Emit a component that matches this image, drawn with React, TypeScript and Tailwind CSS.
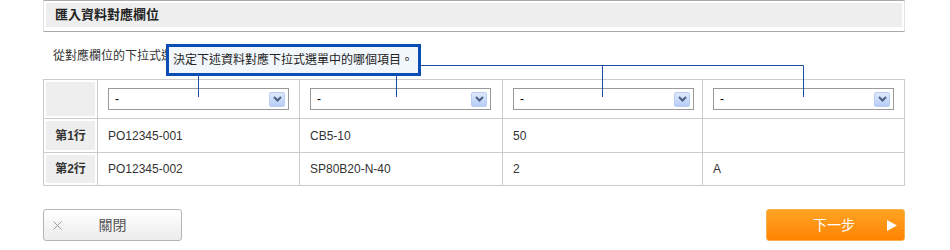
import React from "react";

const cols = [
  { w: "w-[202px]" },
  { w: "w-[203px]" },
  { w: "w-[200px]" },
  { w: "w-[202px]" },
];

const rows = [
  { label: "第1行", cells: ["PO12345-001", "CB5-10", "50", ""], h: "h-[34px]" },
  { label: "第2行", cells: ["PO12345-002", "SP80B20-N-40", "2", "A"], h: "h-[33px]" },
];

const SelectBox = () => (
  <div className="flex h-[22px] w-[181px] items-center justify-between border border-[#999] bg-white pl-[6px] pr-[3px]">
    <span className="text-[12px] text-black">-</span>
    <span className="flex h-[15px] w-[16px] items-center justify-center rounded-[2px] border border-[#b9cdf2] bg-gradient-to-b from-[#dfe9fc] to-[#b7cdf6]">
      <svg width="9" height="6" viewBox="0 0 9 6">
        <path d="M1 1 L4.5 4.5 L8 1" fill="none" stroke="#4b5f86" strokeWidth="2" />
      </svg>
    </span>
  </div>
);

const App = () => {
  return (
    <div className="h-[250px] w-[950px] overflow-hidden bg-white font-['Liberation_Sans','Noto_Sans_CJK_TC',sans-serif] text-[#333]">
      <div className="relative ml-[43px] w-[862px]">
        {/* header */}
        <div className="h-[32px] border-x border-t border-b border-x-[#e2e2e2] border-t-[#aaa] border-b-[#aaa] p-[2px]">
          <div className="flex h-[24px] items-center bg-[#eee] pl-[9px] text-[13px] font-bold text-[#222]">
            匯入資料對應欄位
          </div>
        </div>

        <p className="mt-[16px] h-[16px] pl-[10px] text-[12px] leading-[16px]">
          從對應欄位的下拉式選單中選擇項目。
        </p>

        {/* table */}
        <div className="mt-[15px] border-l border-t border-[#ccc]">
          <div className="flex h-[39px]">
            <div className="w-[54px] border-b border-r border-[#ccc] p-[2px]">
              <div className="h-full bg-[#eee]" />
            </div>
            {cols.map((c, i) => (
              <div key={i} className={`${c.w} flex items-center border-b border-r border-[#ccc] pl-[10px]`}>
                <SelectBox />
              </div>
            ))}
          </div>
          {rows.map((r) => (
            <div key={r.label} className={`flex ${r.h}`}>
              <div className="w-[54px] border-b border-r border-[#ccc] p-[2px]">
                <div className="flex h-full items-center justify-center bg-[#eee] text-[12px] font-bold text-[#333]">
                  {r.label}
                </div>
              </div>
              {r.cells.map((t, i) => (
                <div
                  key={i}
                  className={`${cols[i].w} flex items-center border-b border-r border-[#ccc] pl-[10px] text-[12px] text-[#333]`}
                >
                  {t}
                </div>
              ))}
            </div>
          ))}
        </div>

        {/* buttons */}
        <div className="mt-[23px] flex justify-between">
          <button className="relative flex h-[32px] w-[139px] items-center justify-center rounded-[3px] border border-[#b5b5b5] bg-gradient-to-b from-white to-[#ececec] text-[14px] text-[#555]">
            <svg className="absolute left-[9px] top-[11px]" width="9" height="9" viewBox="0 0 9 9">
              <path d="M0.5 0.5 L8.5 8.5 M8.5 0.5 L0.5 8.5" stroke="#9a9a9a" strokeWidth="1" />
            </svg>
            關閉
          </button>
          <button className="relative flex h-[32px] w-[139px] items-center justify-center rounded-[3px] border border-[#f8b04c] bg-gradient-to-b from-[#ffa321] to-[#ff8300] pr-[3px] text-[14px] text-white">
            下一步
            <svg className="absolute right-[7px] top-[10px]" width="10" height="11" viewBox="0 0 10 11">
              <path d="M0 0 L10 5.5 L0 11 Z" fill="white" />
            </svg>
          </button>
        </div>

        {/* tooltip connectors */}
        <svg className="pointer-events-none absolute left-0 top-0" width="862" height="120">
          <path
            d="M155.5 76 V97 M353.5 76 V97 M378 65.5 H760.5 M559.5 65.5 V97 M760.5 65.5 V97"
            stroke="#1b4fa3"
            strokeWidth="1"
            fill="none"
          />
        </svg>
        <div className="absolute left-[123px] top-[44px] flex h-[32px] w-[255px] items-center border-[3px] border-[#0b4fb4] bg-[#f2f7fc] pl-[4px] text-[12px] text-[#222]">
          決定下述資料對應下拉式選單中的哪個項目。
        </div>
      </div>
    </div>
  );
};

export default App;
